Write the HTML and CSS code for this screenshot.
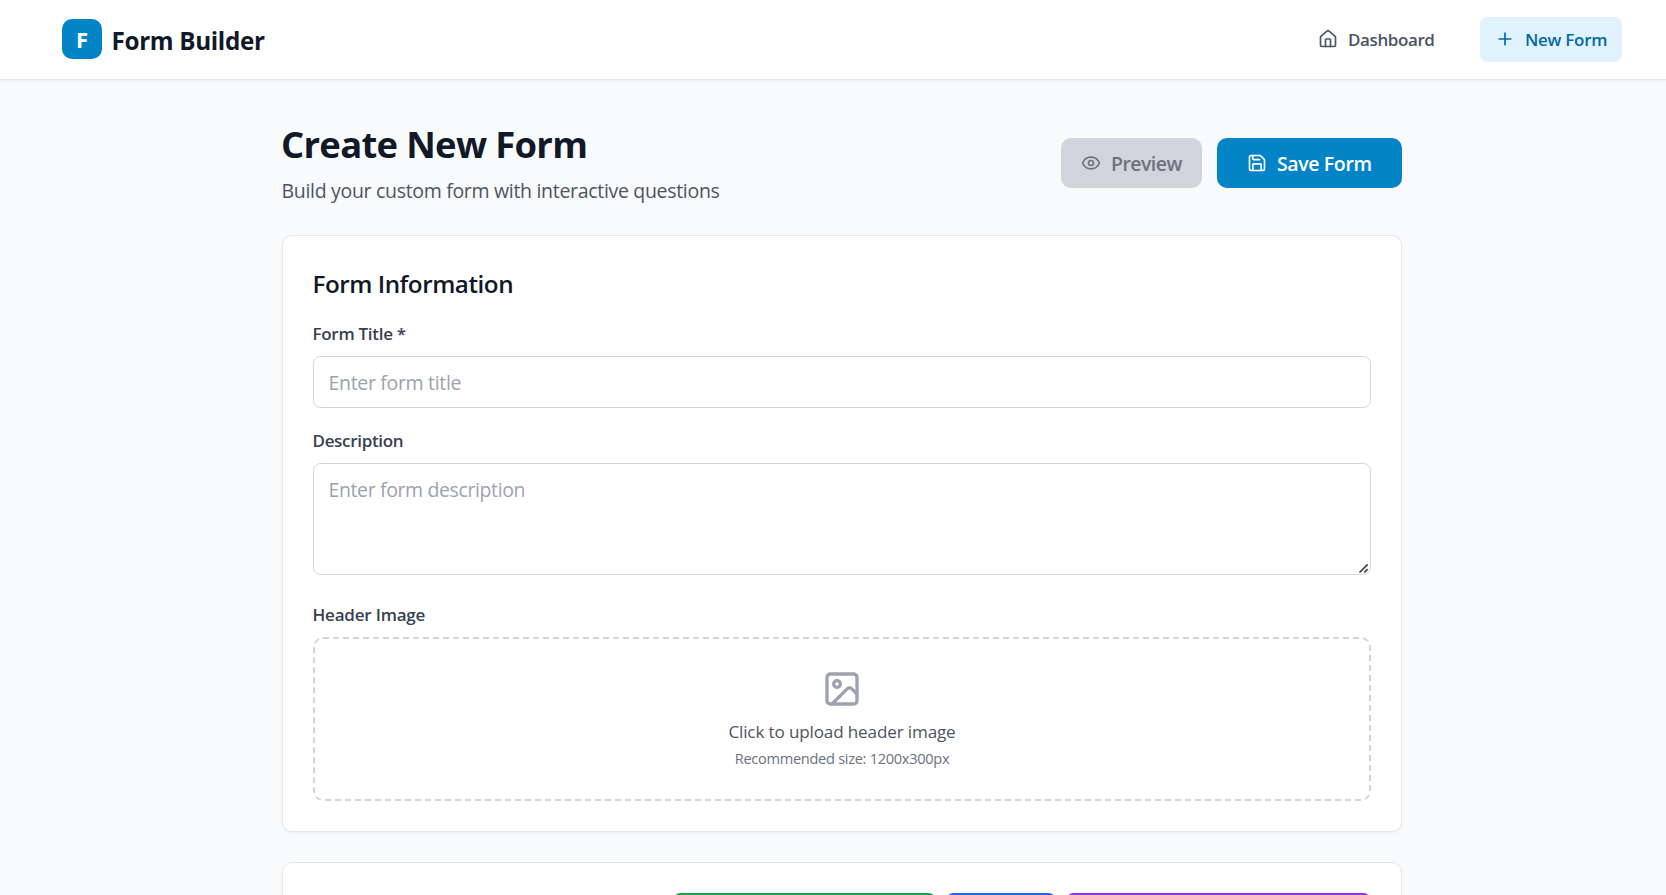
FILE: index.html
```html
<!DOCTYPE html>
<html lang="en">
<head>
<meta charset="utf-8">
<title>Form Builder</title>
<link rel="stylesheet" href="styles.css">
</head>
<body>
<header class="topbar">
  <div class="brand">
    <span class="brand-mark">F</span>
    <span class="brand-name">Form Builder</span>
  </div>
  <nav class="nav">
    <a class="nav-link">
      <svg class="icon" viewBox="0 0 24 24"><path d="M15 21v-8a1 1 0 0 0-1-1h-4a1 1 0 0 0-1 1v8"/><path d="M3 10a2 2 0 0 1 .709-1.528l7-5.999a2 2 0 0 1 2.582 0l7 5.999A2 2 0 0 1 21 10v9a2 2 0 0 1-2 2H5a2 2 0 0 1-2-2z"/></svg>
      <span class="dash-text">Dashboard</span>
    </a>
    <a class="nav-link active">
      <svg class="icon" viewBox="0 0 24 24"><path d="M5 12h14"/><path d="M12 5v14"/></svg>
      <span class="new-text">New Form</span>
    </a>
  </nav>
</header>
<main class="main">
  <div class="page-head">
    <div class="heading">
      <h1>Create New Form</h1>
      <p>Build your custom form with interactive questions</p>
    </div>
    <div class="actions">
      <button class="btn preview">
        <svg class="icon" viewBox="0 0 24 24"><path d="M2.062 12.348a1 1 0 0 1 0-.696 10.75 10.75 0 0 1 19.876 0 1 1 0 0 1 0 .696 10.75 10.75 0 0 1-19.876 0"/><circle cx="12" cy="12" r="3"/></svg>
        <span class="preview-text">Preview</span>
      </button>
      <button class="btn save">
        <svg class="icon" viewBox="0 0 24 24"><path d="M15.2 3a2 2 0 0 1 1.4.6l3.8 3.8a2 2 0 0 1 .6 1.4V19a2 2 0 0 1-2 2H5a2 2 0 0 1-2-2V5a2 2 0 0 1 2-2z"/><path d="M17 21v-7a1 1 0 0 0-1-1H8a1 1 0 0 0-1 1v7"/><path d="M7 3v4a1 1 0 0 0 1 1h7"/></svg>
        <span class="save-text">Save Form</span>
      </button>
    </div>
  </div>
  <section class="card">
    <h2>Form Information</h2>
    <div class="field">
      <label class="title-label">Form Title *</label>
      <input type="text" placeholder="Enter form title">
    </div>
    <div class="field">
      <label class="desc-label">Description</label>
      <div class="textarea-wrap">
        <textarea placeholder="Enter form description"></textarea>
        <svg class="grip" viewBox="0 0 10 10"><path d="M.5 9.5 8.7 1.3M5.3 9.5 8.7 6.1"/></svg>
      </div>
    </div>
    <div class="field image-field">
      <label class="image-label">Header Image</label>
      <div class="dropzone">
        <svg class="icon" viewBox="0 0 24 24"><rect width="18" height="18" x="3" y="3" rx="2" ry="2"/><circle cx="9" cy="9" r="2"/><path d="m21 15-3.086-3.086a2 2 0 0 0-2.828 0L6 21"/></svg>
        <p class="drop-main">Click to upload header image</p>
        <p class="drop-hint">Recommended size: 1200x300px</p>
      </div>
    </div>
  </section>
  <section class="card next">
    <div class="add-buttons">
      <span class="add green"></span>
      <span class="add blue"></span>
      <span class="add purple"></span>
    </div>
  </section>
</main>
</body>
</html>
```
FILE: styles.css
```css
* { box-sizing: border-box; margin: 0; padding: 0; }
html, body { height: 895px; overflow: hidden; }
body {
  background: #f9fafb;
  color: #111827;
  font-family: "Open Sans", "Noto Sans", sans-serif;
  font-size: 19.5px;
  line-height: 30px;
}
span, p, h1, h2, label { white-space: nowrap; }
.icon {
  width: 20px; height: 20px; flex: none;
  fill: none; stroke: currentColor; stroke-width: 2;
  stroke-linecap: round; stroke-linejoin: round;
}
.topbar {
  height: 80px;
  padding: 0 44px 1px 62px;
  display: flex; align-items: center; justify-content: space-between;
  background: #fff;
  border-bottom: 1px solid #e5e7eb;
  box-shadow: 0 1px 2px rgba(0, 0, 0, .05);
}
.brand { display: flex; align-items: center; gap: 9.5px; }
.brand-mark {
  width: 40px; height: 40px; border-radius: 10px;
  display: flex; align-items: center; justify-content: center;
  background: #0284c7; color: #fff; font-weight: 700; font-size: 22px;
}
.brand-name { font-size: 24.25px; font-weight: 700; line-height: 35px; padding-top: 2px; letter-spacing: -.34px; }
.nav { display: flex; gap: 31px; }
.nav-link {
  height: 45px; padding: 0 15px; border-radius: 7.5px;
  display: flex; align-items: center; gap: 10px;
  color: #4b5563; font-size: 17px; font-weight: 600; line-height: 25px;
}
.nav-link span { padding-top: 1px; }
.dash-text { letter-spacing: -.4px; }
.new-text { letter-spacing: -.28px; }
.nav-link.active { width: 142px; background: #e0f2fe; color: #0369a1; }
.nav-link:first-child { width: 146px; }
.main { width: 1120px; margin: 40px 0 0 282px; }
.page-head { height: 85px; display: flex; align-items: center; justify-content: space-between; }
h1 { font-size: 36.4px; line-height: 45px; font-weight: 700; margin: 2px 0 8px -1px; letter-spacing: -.68px; }
.heading p { color: #4b5563; padding-top: 1px; margin-left: -.5px; letter-spacing: -.31px; }
.actions { display: flex; gap: 15px; }
.btn {
  height: 50px; border: 0; border-radius: 10px;
  display: flex; align-items: center; gap: 10px;
  font-family: inherit; font-size: 19.5px; line-height: 30px; font-weight: 600;
}
.btn span { padding-top: 2px; }
.preview { width: 141px; padding-left: 20px; background: #d1d5db; color: #6b7280; letter-spacing: -.55px; }
.save { width: 185px; padding-left: 30px; background: #0284c7; color: #fff; letter-spacing: -.38px; }
.card {
  margin-top: 30px; padding: 30px;
  background: #fff; border: 1px solid #e5e7eb; border-radius: 10px;
  box-shadow: 0 1px 2px rgba(0, 0, 0, .05);
}
h2 { font-size: 24.25px; line-height: 35px; font-weight: 600; margin: 0 0 20px -.5px; letter-spacing: -.48px; }
.field { margin-bottom: 20px; }
label { display: block; margin: 0 0 10px -.5px; font-size: 17px; line-height: 25px; font-weight: 600; color: #374151; }
.title-label { letter-spacing: -.28px; }
.desc-label { letter-spacing: -.32px; }
.image-label { letter-spacing: -.2px; }
input, textarea {
  display: block; width: 100%; padding: 10px 15px 10px 14.5px;
  border: 1px solid #d1d5db; border-radius: 7.5px; background: #fff;
  font-family: inherit; font-size: 19.5px; line-height: 30px;
}
input { height: 52px; letter-spacing: -.32px; }
textarea { height: 112px; padding-top: 11px; resize: none; letter-spacing: -.38px; }
.textarea-wrap { position: relative; }
.grip {
  position: absolute; right: 2px; bottom: 2px; width: 10px; height: 10px;
  fill: none; stroke: #4b4b4b; stroke-width: 1.8;
}
::placeholder { color: #9ca3af; opacity: 1; }
.image-field { margin: 27px 0 0; }
.dropzone {
  height: 164px; padding: 30px;
  display: flex; flex-direction: column; align-items: center;
  border: 2px dashed #d1d5db; border-radius: 10px;
}
.dropzone .icon { width: 40px; height: 40px; color: #9ca3af; margin-bottom: 10px; }
.drop-main { font-size: 17.1px; line-height: 25px; color: #4b5563; letter-spacing: -.15px; }
.drop-hint { margin-top: 4px; font-size: 14.6px; line-height: 20px; color: #6b7280; letter-spacing: -.3px; }
.add-buttons { display: flex; justify-content: flex-end; gap: 10px; }
.add { height: 45px; border-radius: 7.5px; }
.green { width: 263px; background: #16a34a; }
.blue { width: 110px; background: #2563eb; }
.purple { width: 305px; background: #9333ea; }
```
